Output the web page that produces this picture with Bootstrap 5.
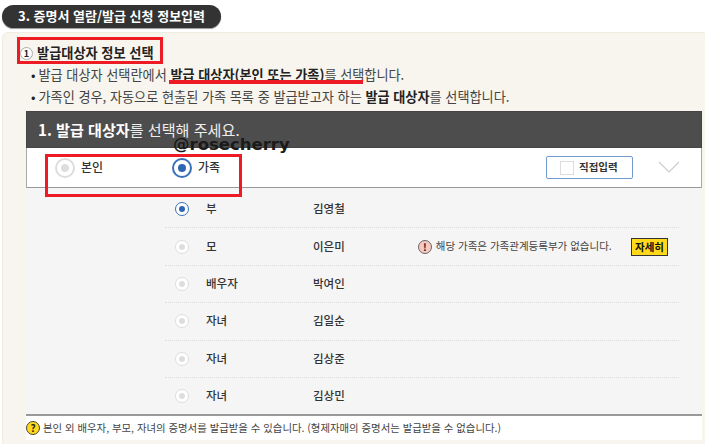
<!DOCTYPE html>
<html lang="ko">
<head>
    <meta charset="UTF-8">
    <meta name="viewport" content="width=device-width, initial-scale=1.0">
    <title>증명서 열람/발급 신청 정보입력</title>
    <link href="https://cdn.jsdelivr.net/npm/bootstrap@5.3.0/dist/css/bootstrap.min.css" rel="stylesheet">
    <style>
        html, body {
            height: 444px;
            overflow: hidden;
        }
        body {
            font-family: "Noto Sans CJK KR", "Liberation Sans", sans-serif;
            font-size: 12px;
            line-height: 1.2;
            color: #333;
            background-color: #fff;
        }
        .page-wrap {
            width: 705px;
            height: 444px;
            padding: 5px 0 0 2px;
        }
        .step-pill {
            width: 219px;
            height: 23px;
            line-height: 22px;
            padding-left: 16px;
            margin-bottom: 4px;
            background-color: #333;
            color: #fff;
            font-size: 13px;
            font-weight: 700;
            box-shadow: 0 1px 1px #999;
        }
        .info-panel {
            height: 412px;
            padding: 11px 0 0 23px;
            background-color: #f8f5ee;
            border-radius: 6px 0 0 0;
            border-top: 1px solid #f1ece0;
            border-left: 1px solid #f1ece0;
        }
        .sub-title {
            height: 18px;
            margin: 0 0 2px -6px;
            font-size: 13.2px;
            font-weight: 700;
            color: #222;
        }
        .num-circle {
            flex: none;
            width: 13px;
            height: 13px;
            margin-right: 4px;
            border: 1px solid #aaa;
            border-radius: 50%;
            background-color: #fff;
            font-size: 9px;
            font-weight: 700;
            line-height: 11px;
            text-align: center;
        }
        .guide-list {
            height: 44px;
            margin: 0 0 3px 0;
            padding-left: 5px;
            list-style: none;
            font-size: 13.15px;
            color: #444;
        }
        .guide-list li {
            height: 22px;
            line-height: 22px;
        }
        .guide-list li::before {
            content: "•";
            margin-right: 3px;
            color: #222;
        }
        .guide-list b {
            color: #222;
        }
        .select-box {
            width: 676px;
        }
        .box-head {
            height: 37px;
            padding-left: 11px;
            line-height: 34px;
            background-color: #4d4d4d;
            border: 1px solid #444;
            font-size: 15.1px;
            color: #eee;
        }
        .box-head b {
            color: #fff;
        }
        .who-row {
            height: 40px;
            padding: 0 21px 0 28px;
            background-color: #fff;
            border-right: 1px solid #aaa;
            border-bottom: 1px solid #999;
            border-left: 1px solid #aaa;
            font-size: 12px;
            font-weight: 500;
            color: #333;
        }
        .who-item {
            width: 117px;
            gap: 6px;
        }
        .radio-big, .radio-small {
            flex: none;
            border-radius: 50%;
            background-color: #fff;
        }
        .radio-big {
            width: 20px;
            height: 20px;
            border: 2px solid #3a70b8;
        }
        .radio-small {
            width: 14px;
            height: 14px;
            border: 1px solid #3a70b8;
        }
        .radio-big::after, .radio-small::after {
            content: "";
            display: block;
            border-radius: 50%;
            background-color: #2f66b3;
        }
        .radio-big::after {
            width: 8px;
            height: 8px;
            margin: 4px;
        }
        .radio-small::after {
            width: 6px;
            height: 6px;
            margin: 3px;
        }
        .radio-off {
            border-color: #ddd;
        }
        .radio-off::after {
            background-color: #ddd;
        }
        .direct-btn {
            width: 87px;
            height: 23px;
            margin-left: auto;
            margin-right: 25px;
            padding: 0 0 0 13px;
            gap: 5px;
            background-color: #fff;
            border: 1px solid #6f9bd1;
            border-radius: 2px;
            font-size: 10.5px;
            font-weight: 700;
            color: #333;
        }
        .check-box {
            width: 14px;
            height: 14px;
            border: 1px solid #ddd;
        }
        .family-area {
            height: 226px;
            padding: 3px 23px 0 139px;
            background-color: #f5f5f5;
        }
        .family-row {
            height: 37.4px;
            padding-left: 10px;
            border-bottom: 1px dotted #ddd;
            font-size: 11.5px;
            font-weight: 500;
            color: #333;
        }
        .family-row:last-child {
            height: 36px;
            border-bottom: 0;
        }
        .rel-name {
            width: 124px;
            padding-left: 17px;
        }
        .warn-msg {
            margin-left: 73px;
            gap: 4px;
            font-size: 10.5px;
            font-weight: 400;
            color: #444;
        }
        .warn-icon, .help-icon {
            flex: none;
            border-radius: 50%;
            font-weight: 700;
            text-align: center;
            color: #222;
        }
        .warn-icon {
            width: 14px;
            height: 14px;
            background-color: #f8c9c0;
            border: 1px solid #666;
            font-size: 10px;
            line-height: 12px;
        }
        .more-tag {
            width: 37px;
            height: 18px;
            margin-left: auto;
            margin-right: 11px;
            background-color: #ffd91a;
            border: 1px solid #333;
            font-size: 10.5px;
            font-weight: 700;
            line-height: 16px;
            text-align: center;
            color: #111;
        }
        .foot-note {
            height: 26px;
            gap: 3px;
            background-color: #fff;
            border-top: 2px solid #999;
            font-size: 10.4px;
            color: #444;
        }
        .help-icon {
            width: 14px;
            height: 14px;
            background-color: #ffd91a;
            border: 1px solid #444;
            font-size: 10px;
            line-height: 12px;
        }
        /* 빨간 표시, 워터마크 */
        .red-frame {
            border: 3px solid #ed1c24;
        }
        .red-a {
            left: 17px;
            top: 37px;
            width: 146px;
            height: 27px;
        }
        .red-b {
            left: 45px;
            top: 154px;
            width: 197px;
            height: 43px;
        }
        .red-line {
            left: 169px;
            top: 80px;
            width: 194px;
            height: 4px;
            background-color: #ed1c24;
        }
        .water-mark {
            left: 173px;
            top: 135px;
            font-family: "DejaVu Sans", sans-serif;
            font-size: 16.5px;
            font-weight: 700;
            color: #1a1a1a;
        }
    </style>
</head>
<body>
    <div class="page-wrap position-relative">
        <div class="step-pill rounded-pill">3. 증명서 열람/발급 신청 정보입력</div>

        <div class="info-panel">
            <div class="sub-title d-flex align-items-center">
                <span class="num-circle">1</span>발급대상자 정보 선택
            </div>
            <ul class="guide-list">
                <li>발급 대상자 선택란에서 <b>발급 대상자(본인 또는 가족)</b>를 선택합니다.</li>
                <li>가족인 경우, 자동으로 현출된 가족 목록 중 발급받고자 하는 <b>발급 대상자</b>를 선택합니다.</li>
            </ul>

            <div class="select-box">
                <div class="box-head"><b>1. 발급 대상자</b>를 선택해 주세요.</div>

                <div class="who-row d-flex align-items-center">
                    <div class="who-item d-flex align-items-center"><span class="radio-big radio-off"></span>본인</div>
                    <div class="who-item d-flex align-items-center"><span class="radio-big"></span>가족</div>
                    <button type="button" class="direct-btn d-flex align-items-center"><span class="check-box"></span>직접입력</button>
                    <svg width="22" height="13" viewBox="0 0 22 13"><path d="M1 1l10 10L21 1" fill="none" stroke="#ccc" stroke-width="1.2"/></svg>
                </div>

                <div class="family-area">
                    <div class="family-row d-flex align-items-center">
                        <span class="radio-small"></span><span class="rel-name">부</span><span>김영철</span>
                    </div>
                    <div class="family-row d-flex align-items-center">
                        <span class="radio-small radio-off"></span><span class="rel-name">모</span><span>이은미</span>
                        <span class="warn-msg d-flex align-items-center"><span class="warn-icon">!</span>해당 가족은 가족관계등록부가 없습니다.</span>
                        <span class="more-tag">자세히</span>
                    </div>
                    <div class="family-row d-flex align-items-center">
                        <span class="radio-small radio-off"></span><span class="rel-name">배우자</span><span>박여인</span>
                    </div>
                    <div class="family-row d-flex align-items-center">
                        <span class="radio-small radio-off"></span><span class="rel-name">자녀</span><span>김일순</span>
                    </div>
                    <div class="family-row d-flex align-items-center">
                        <span class="radio-small radio-off"></span><span class="rel-name">자녀</span><span>김상준</span>
                    </div>
                    <div class="family-row d-flex align-items-center">
                        <span class="radio-small radio-off"></span><span class="rel-name">자녀</span><span>김상민</span>
                    </div>
                </div>

                <div class="foot-note d-flex align-items-center">
                    <span class="help-icon">?</span>본인 외 배우자, 부모, 자녀의 증명서를 발급받을 수 있습니다. (형제자매의 증명서는 발급받을 수 없습니다.)
                </div>
            </div>
        </div>

        <div class="red-frame red-a position-absolute"></div>
        <div class="red-line position-absolute"></div>
        <div class="red-frame red-b position-absolute"></div>
        <div class="water-mark position-absolute">@rosecherry</div>
    </div>

    <script src="https://cdn.jsdelivr.net/npm/bootstrap@5.3.0/dist/js/bootstrap.bundle.min.js"></script>
</body>
</html>
